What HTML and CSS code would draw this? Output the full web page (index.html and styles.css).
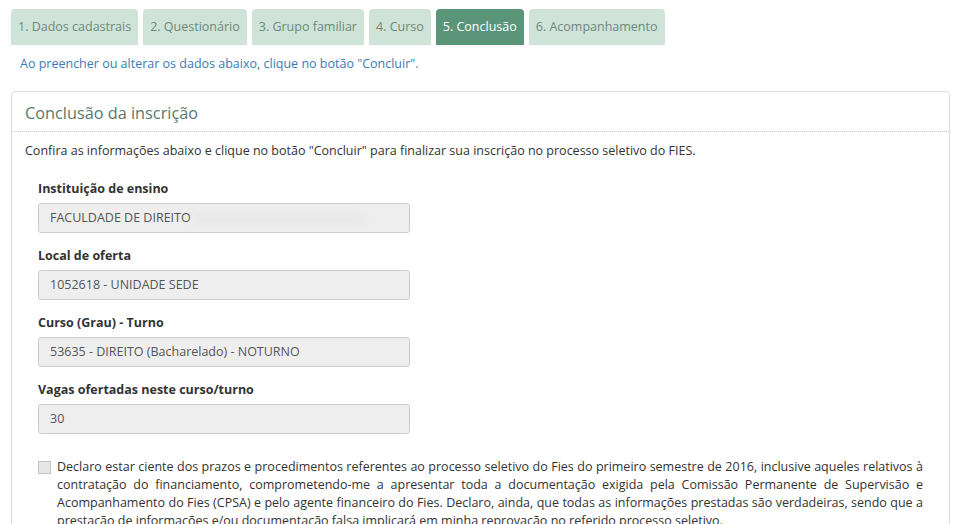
FILE: index.html
```html
<!DOCTYPE html>
<html lang="pt-BR">
<head>
    <meta charset="UTF-8">
    <title>FIES - Conclusão</title>
    <link rel="stylesheet" href="styles.css">
</head>
<body>
    <ul class="steps">
        <li><a href="#">1. Dados cadastrais</a></li>
        <li><a href="#">2. Questionário</a></li>
        <li><a href="#">3. Grupo familiar</a></li>
        <li><a href="#">4. Curso</a></li>
        <li class="active"><a href="#">5. Conclusão</a></li>
        <li><a href="#">6. Acompanhamento</a></li>
    </ul>

    <p class="hint">Ao preencher ou alterar os dados abaixo, clique no botão "Concluir".</p>

    <section class="panel">
        <div class="panel-heading">
            <h2>Conclusão da inscrição</h2>
        </div>
        <div class="panel-body">
            <p class="intro">Confira as informações abaixo e clique no botão "Concluir" para finalizar sua inscrição no processo seletivo do FIES.</p>

            <div class="fields">
                <div class="field">
                    <label>Instituição de ensino</label>
                    <div class="input">FACULDADE DE DIREITO <span class="blurred"></span></div>
                </div>
                <div class="field">
                    <label>Local de oferta</label>
                    <div class="input">1052618 - UNIDADE SEDE</div>
                </div>
                <div class="field">
                    <label>Curso (Grau) - Turno</label>
                    <div class="input">53635 - DIREITO (Bacharelado) - NOTURNO</div>
                </div>
                <div class="field">
                    <label>Vagas ofertadas neste curso/turno</label>
                    <div class="input">30</div>
                </div>

                <div class="declare">
                    <span class="check"></span>
                    <p>Declaro estar ciente dos prazos e procedimentos referentes ao processo seletivo do Fies do primeiro semestre de 2016, inclusive aqueles relativos à contratação do financiamento, comprometendo-me a apresentar toda a documentação exigida pela Comissão Permanente de Supervisão e Acompanhamento do Fies (CPSA) e pelo agente financeiro do Fies. Declaro, ainda, que todas as informações prestadas são verdadeiras, sendo que a prestação de informações e/ou documentação falsa implicará em minha reprovação no referido processo seletivo.</p>
                </div>
            </div>
        </div>
    </section>
</body>
</html>
```

FILE: styles.css
```css
* {
    margin: 0;
    padding: 0;
    box-sizing: border-box;
}
body {
    font-family: "Open Sans", "DejaVu Sans", sans-serif;
    font-size: 12.5px;
    color: #333;
    background: #fff;
}
.steps {
    list-style: none;
    display: flex;
    gap: 5px;
    padding: 9px 0 0 11px;
}
.steps li a {
    display: block;
    height: 36px;
    line-height: 36px;
    padding: 0 7px;
    background: #cfe3d9;
    color: #6b8a7c;
    text-decoration: none;
    border-radius: 4px 4px 0 0;
}
.steps li.active a {
    background: #5a9479;
    color: #fff;
}
.hint {
    color: #3b7bb5;
    padding: 10px 0 0 20px;
    line-height: 18px;
}
.panel {
    margin: 18px 10px 0 11px;
    border: 1px solid #ddd;
    border-radius: 4px;
}
.panel-heading {
    padding: 0 13px;
    height: 40px;
    border-bottom: 1px dotted #ccc;
    display: flex;
    align-items: center;
}
.panel-heading h2 {
    font-size: 16.3px;
    font-weight: normal;
    color: #58796b;
    padding-top: 2px;
}
.panel-body {
    padding: 10px 13px;
}
.intro {
    line-height: 18px;
}
.fields {
    padding: 20px 13px 0;
}
.field {
    margin-bottom: 14px;
}
.field label {
    display: block;
    font-weight: bold;
    line-height: 18px;
    margin-bottom: 5px;
}
.input {
    width: 372px;
    height: 30px;
    line-height: 28px;
    padding: 0 11px;
    background: #eee;
    border: 1px solid #ccc;
    border-radius: 3px;
    color: #555;
    white-space: nowrap;
    overflow: hidden;
}
.blurred {
    display: inline-block;
    width: 170px;
    height: 12px;
    vertical-align: middle;
    background: #e8e8e8;
    filter: blur(3px);
}
.declare {
    display: flex;
    gap: 6px;
    margin-top: 24px;
}
.check {
    flex: none;
    width: 13px;
    height: 13px;
    margin-top: 3px;
    background: #e6e6e6;
    border: 1px solid #c4c4c4;
}
.declare p {
    text-align: justify;
    line-height: 18px;
}
```
